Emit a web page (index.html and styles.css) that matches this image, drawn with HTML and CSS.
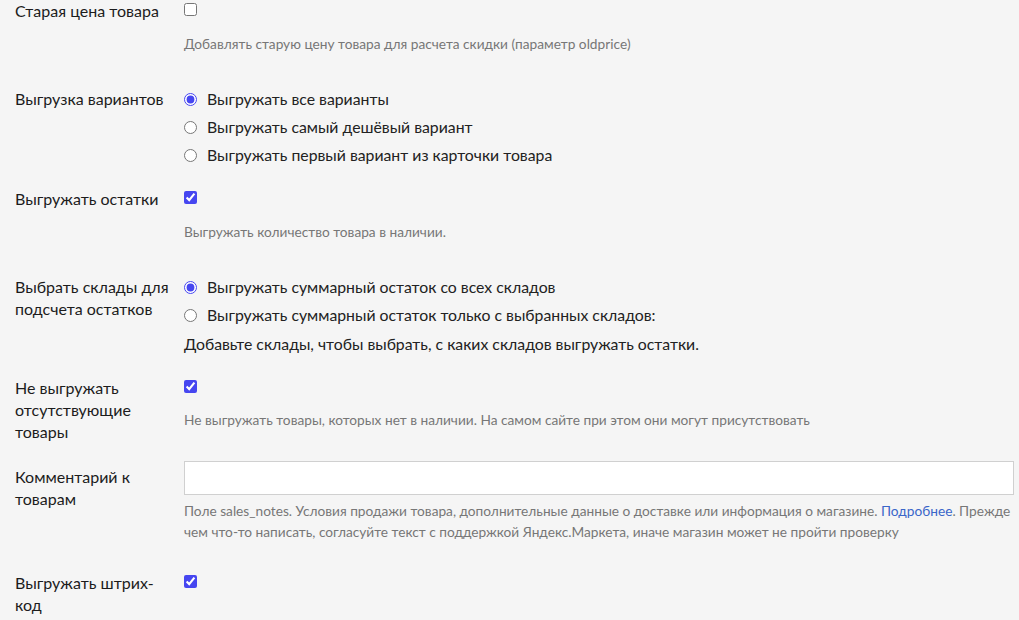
FILE: index.html
```html
<!DOCTYPE html>
<html lang="ru">
<head>
  <meta charset="UTF-8">
  <title>Настройки выгрузки</title>
  <link rel="stylesheet" href="styles.css">
</head>
<body>

<div class="form">

  <!-- Старая цена -->
  <div class="row">
    <div class="label">Старая цена товара</div>
    <div class="field">
      <div class="line"><input type="checkbox"></div>
      <div class="hint">Добавлять старую цену товара для расчета скидки (параметр oldprice)</div>
    </div>
  </div>

  <!-- Варианты -->
  <div class="row">
    <div class="label">Выгрузка вариантов</div>
    <div class="field options">
      <label class="option"><input type="radio" name="variants" checked>Выгружать все варианты</label>
      <label class="option"><input type="radio" name="variants">Выгружать самый дешёвый вариант</label>
      <label class="option"><input type="radio" name="variants">Выгружать первый вариант из карточки товара</label>
    </div>
  </div>

  <!-- Остатки -->
  <div class="row">
    <div class="label">Выгружать остатки</div>
    <div class="field">
      <div class="line"><input type="checkbox" checked></div>
      <div class="hint">Выгружать количество товара в наличии.</div>
    </div>
  </div>

  <!-- Склады -->
  <div class="row">
    <div class="label">Выбрать склады для подсчета остатков</div>
    <div class="field options">
      <label class="option"><input type="radio" name="stock" checked>Выгружать суммарный остаток со всех складов</label>
      <label class="option"><input type="radio" name="stock">Выгружать суммарный остаток только с выбранных складов:</label>
      <div class="note">Добавьте склады, чтобы выбрать, с каких складов выгружать остатки.</div>
    </div>
  </div>

  <!-- Отсутствующие -->
  <div class="row">
    <div class="label">Не выгружать отсутствующие товары</div>
    <div class="field">
      <div class="line"><input type="checkbox" checked></div>
      <div class="hint hint-near">Не выгружать товары, которых нет в наличии. На самом сайте при этом они могут присутствовать</div>
    </div>
  </div>

  <!-- Комментарий -->
  <div class="row row-input">
    <div class="label">Комментарий к товарам</div>
    <div class="field">
      <input type="text" class="text">
      <div class="hint hint-tight">Поле sales_notes. Условия продажи товара, дополнительные данные о доставке или информация о магазине. <a href="#">Подробнее</a>. Прежде чем что-то написать, согласуйте текст с поддержкой Яндекс.Маркета, иначе магазин может не пройти проверку</div>
    </div>
  </div>

  <!-- Штрих-код -->
  <div class="row">
    <div class="label">Выгружать штрих-код</div>
    <div class="field">
      <div class="line"><input type="checkbox" checked></div>
    </div>
  </div>

</div>

</body>
</html>
```

FILE: styles.css
```css
body { margin: 0; background: #f5f5f5; color: #222; font-family: Lato, "Noto Sans", sans-serif; font-size: 15.8px; }
.form { padding: 0 5px 0 15px; }
.row { display: flex; gap: 9px; margin-bottom: 22px; }
.label { width: 160px; flex-shrink: 0; line-height: 22px; font-size: 16px; color: #1c1c1c; }
.field { flex: 1; min-width: 0; }
.line { height: 22px; display: flex; align-items: flex-start; }
input[type=checkbox], input[type=radio] { margin: 0; width: 13px; height: 13px; accent-color: #4646f0; }
.line input[type=checkbox] { margin-top: 3px; }
.hint { font-size: 13.7px; color: #777; line-height: 20px; margin: 12px 0 12px; }
.hint-near { margin-top: 11px; }
.hint-tight { margin: 5px 0 8px; line-height: 21px; }
.hint a { color: #3a66c9; text-decoration: none; }
.options { display: flex; flex-direction: column; gap: 6px; }
.option { display: flex; align-items: center; gap: 10px; line-height: 22px; cursor: pointer; }
.note { margin-top: 1px; line-height: 22px; }
.row-input { margin-top: -4px; }
.row-input .label { padding-top: 5px; }
.text { display: block; width: 100%; height: 34px; box-sizing: border-box; border: 1px solid #d0d0d0; background: #fff; margin: 0; }
```
